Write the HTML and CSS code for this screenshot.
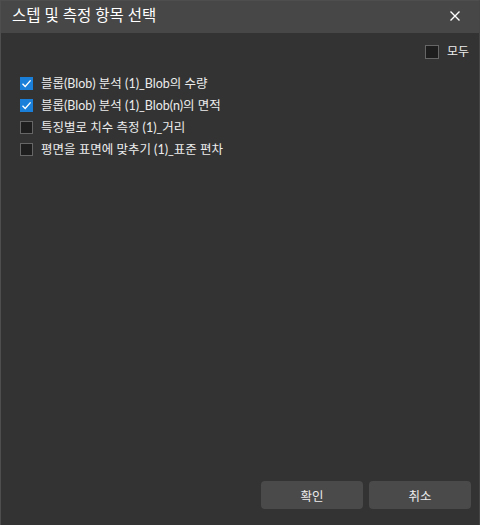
FILE: index.html
```html
<!DOCTYPE html>
<html lang="ko">
<head>
<meta charset="utf-8">
<link rel="stylesheet" href="styles.css">
</head>
<body>
<div class="dialog">
  <div class="titlebar">
    <span class="title">스텝 및 측정 항목 선택</span>
    <svg class="close" width="10" height="10" viewBox="0 0 10 10"><path d="M0.5 0.5L9.5 9.5M9.5 0.5L0.5 9.5" stroke="#ffffff" stroke-width="1.4" fill="none"/></svg>
  </div>
  <div class="content">
    <div class="all-row">
      <label class="item"><span class="box"></span><span class="label">모두</span></label>
    </div>
    <div class="list">
      <label class="item"><span class="box checked"><svg width="13" height="13" viewBox="0 0 13 13"><path d="M2.5 6.8L5.2 9.4L10.6 3.4" stroke="#ffffff" stroke-width="1.4" fill="none"/></svg></span><span class="label">블롭(Blob) 분석 (1)_Blob의 수량</span></label>
      <label class="item"><span class="box checked"><svg width="13" height="13" viewBox="0 0 13 13"><path d="M2.5 6.8L5.2 9.4L10.6 3.4" stroke="#ffffff" stroke-width="1.4" fill="none"/></svg></span><span class="label">블롭(Blob) 분석 (1)_Blob(n)의 면적</span></label>
      <label class="item"><span class="box"></span><span class="label">특징별로 치수 측정 (1)_거리</span></label>
      <label class="item"><span class="box"></span><span class="label">평면을 표면에 맞추기 (1)_표준 편차</span></label>
    </div>
  </div>
  <div class="footer">
    <button class="btn">확인</button>
    <button class="btn">취소</button>
  </div>
</div>
</body>
</html>
```
FILE: styles.css
```css
* { box-sizing: border-box; }
html, body {
  margin: 0;
  padding: 0;
  width: 480px;
  height: 525px;
  background: #333333;
  overflow: hidden;
}
body {
  font-family: Lato, "Noto Sans CJK KR", sans-serif;
  color: #e8e8e8;
}
.dialog {
  width: 480px;
  height: 525px;
  display: flex;
  flex-direction: column;
  background: #333333;
  border-left: 1px solid #4e4e4e;
  border-top: 1px solid #4e4e4e;
  border-right: 1px solid #454545;
}
.titlebar {
  height: 32px;
  background: #474747;
  display: flex;
  align-items: center;
  justify-content: space-between;
  padding: 0 19px 0 11px;
  flex-shrink: 0;
}
.title {
  font-size: 15.5px;
  color: #ffffff;
  line-height: 1;
  position: relative;
  top: -1px;
}
.close { display: block; position: relative; top: -1px; }
.content {
  flex: 1;
  padding: 12px 10px 0 19px;
  display: flex;
  flex-direction: column;
}
.all-row {
  display: flex;
  justify-content: flex-end;
}
.all-row .item { font-size: 12px; }
.all-row .box { width: 14px; height: 14px; }
.all-row .label { margin-left: 8px; }
.list {
  margin-top: 19px;
  display: flex;
  flex-direction: column;
  gap: 9px;
}
.item {
  display: flex;
  align-items: center;
  height: 13px;
  font-size: 12.5px;
  line-height: 13px;
}
.box {
  width: 13px;
  height: 13px;
  border: 1px solid #666666;
  background: #1e1e1e;
  display: inline-flex;
  align-items: center;
  justify-content: center;
  flex-shrink: 0;
}
.box.checked {
  border: none;
  background: #1a7fd8;
}
.box svg { display: block; }
.label {
  margin-left: 8px;
  white-space: nowrap;
  color: #ececec;
}
.footer {
  display: flex;
  justify-content: flex-end;
  gap: 6px;
  padding: 0 8px 16px 0;
}
.btn {
  width: 102px;
  height: 28px;
  border: none;
  border-radius: 4px;
  background: #4a4a4a;
  color: #ececec;
  font-family: Lato, "Noto Sans CJK KR", sans-serif;
  font-size: 12.5px;
  padding: 0;
}
```
